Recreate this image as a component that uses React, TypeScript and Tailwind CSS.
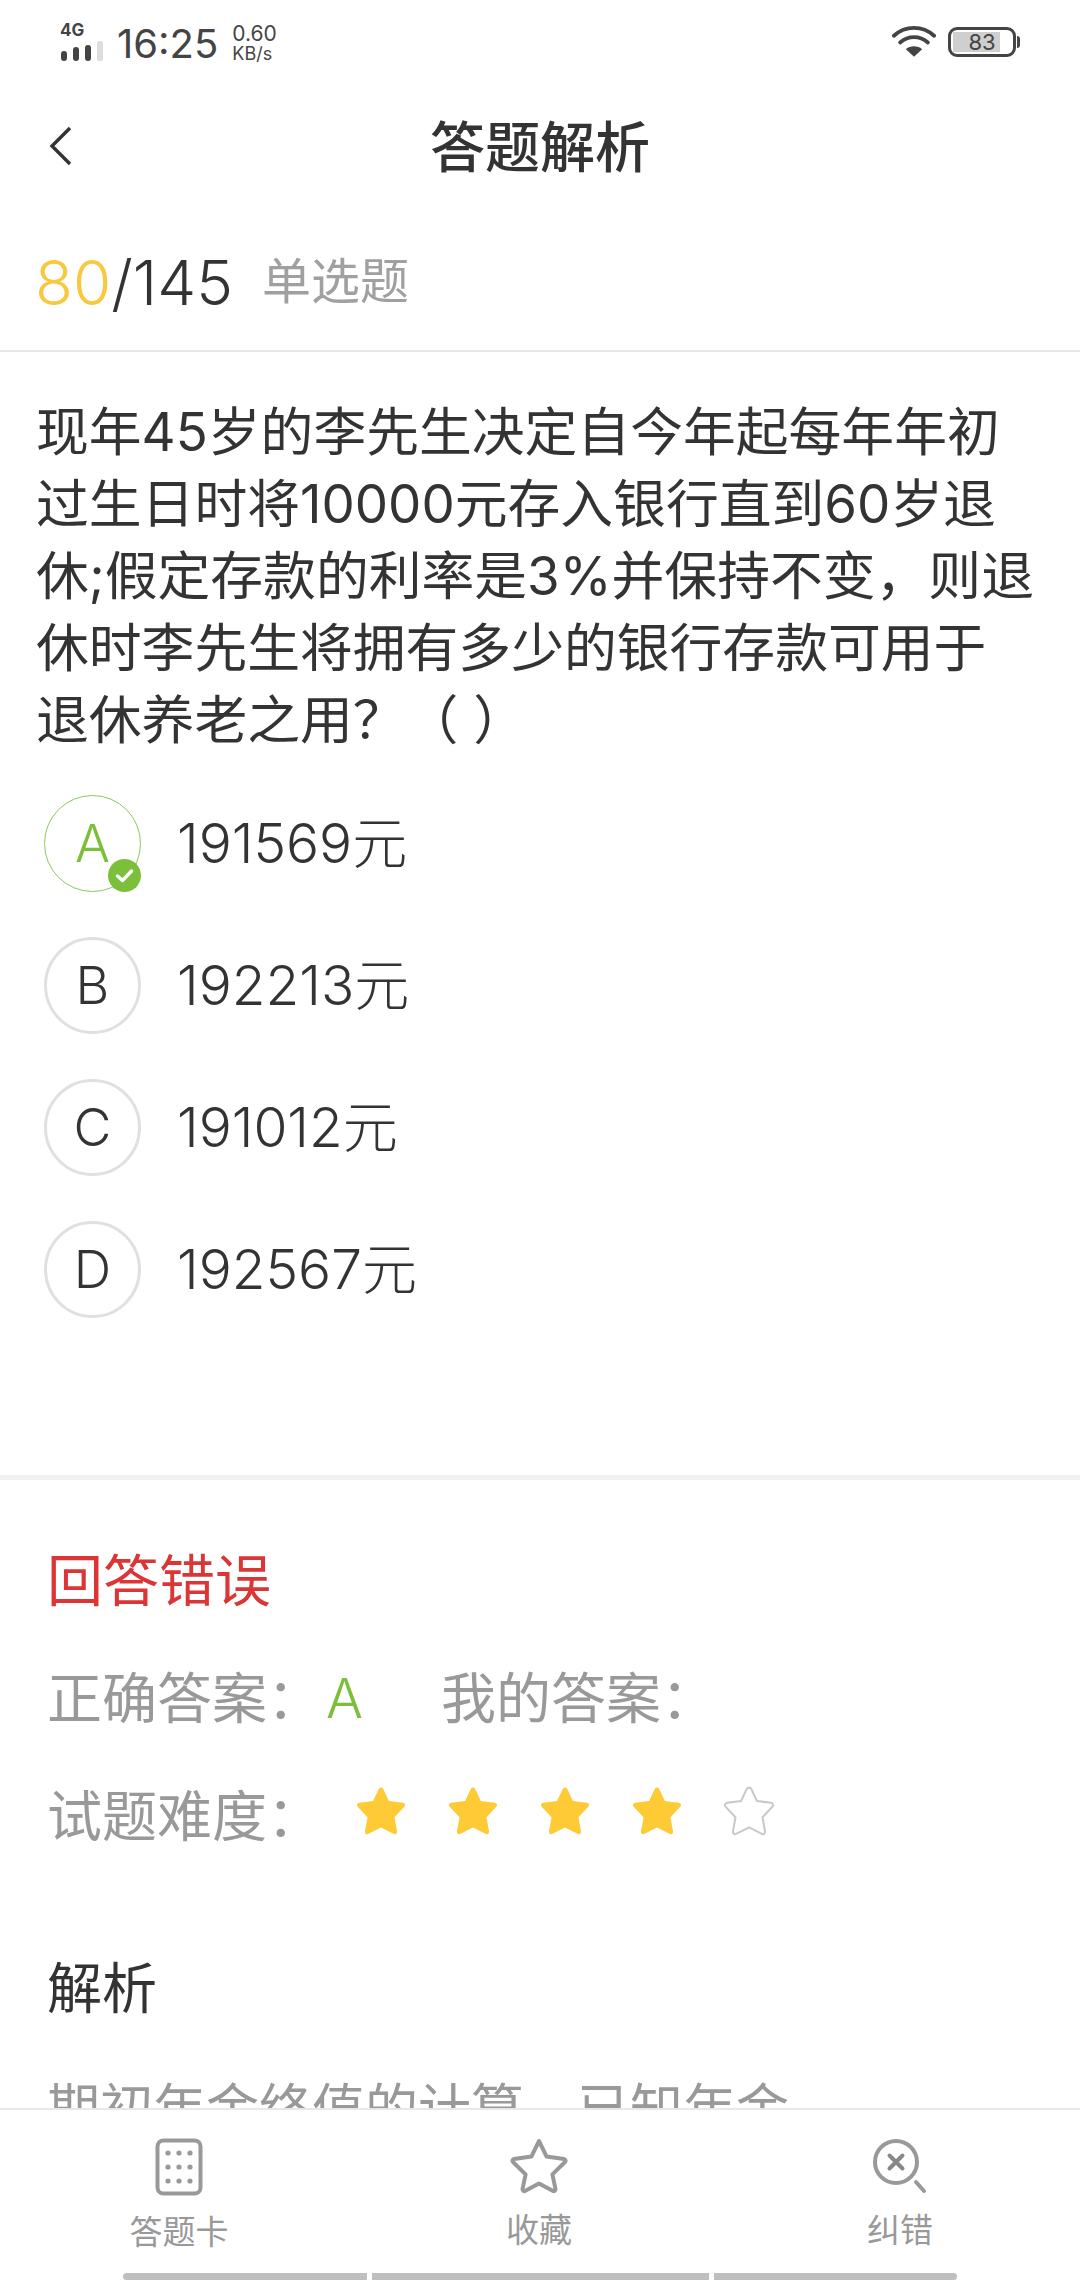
import React from "react";

const options = [
  { key: "A", text: "191569元", correct: true },
  { key: "B", text: "192213元" },
  { key: "C", text: "191012元" },
  { key: "D", text: "192567元" },
];

const StarIcon = ({ filled }: { filled: boolean }) => (
  <svg width="52" height="52" viewBox="0 0 50 50" className="block">
    <path
      d="M25 2.5 C26 2.5 26.8 3 27.3 4 L32.6 15.4 L45.9 17 C48 17.3 48.8 19.4 47.4 21 L38 31 L40.4 44.6 C40.8 46.5 39 47.8 37.4 47 L25 40.8 L12.6 47 C11 47.8 9.2 46.5 9.6 44.6 L12 31 L2.6 21 C1.2 19.4 2 17.3 4.1 17 L17.4 15.4 L22.7 4 C23.2 3 24 2.5 25 2.5 Z"
      fill={filled ? "#fecb37" : "#fff"}
      stroke={filled ? "#fecb37" : "#c9c9cc"}
      strokeWidth={filled ? 0 : 2}
    />
  </svg>
);

const CardIcon = () => (
  <svg width="48" height="58" viewBox="0 0 48 58" fill="none" className="block">
    <rect x="2.5" y="2.5" width="43" height="53" rx="6" stroke="#999" strokeWidth="4" />
    {[15, 29, 43].map((y) =>
      [13, 24, 35].map((x) => <circle key={`${x}-${y}`} cx={x} cy={y} r="2.6" fill="#999" />)
    )}
  </svg>
);

const TabStar = () => (
  <svg width="58" height="56" viewBox="0 0 58 56" fill="none" className="block">
    <path
      d="M29 3 L36.6 18.6 L54 21 C55.6 21.3 56 23 55 24 L42.4 36.4 L45.4 50.6 C45.7 52.6 44 53.6 42.6 52.8 L29 45.4 L15.4 52.8 C14 53.6 12.3 52.6 12.6 50.6 L15.6 36.4 L3 24 C2 23 2.4 21.3 4 21 L21.4 18.6 Z"
      stroke="#999"
      strokeWidth="4"
      strokeLinejoin="round"
    />
  </svg>
);

const SearchX = () => (
  <svg width="56" height="56" viewBox="0 0 56 56" fill="none" className="block">
    <circle cx="24" cy="24" r="21" stroke="#999" strokeWidth="4" />
    <path d="M17.5 17.5 L30.5 30.5 M30.5 17.5 L17.5 30.5" stroke="#888" strokeWidth="4" strokeLinecap="round" />
    <path d="M44 44 L52 53" stroke="#999" strokeWidth="4" strokeLinecap="round" />
  </svg>
);

const StatusBar = () => (
  <div className="h-[80px] shrink-0 flex items-start justify-between pl-[60px] pr-[64px] text-[#444]">
    <div className="flex items-start">
      <div className="w-[44px] pt-[22px]">
        <div className="text-[17px] leading-[16px] font-bold">4G</div>
        <div className="flex gap-[6px] mt-[3px] pl-[1px] items-end">
          <span className="w-[6px] h-[10px] rounded-[3px] bg-[#444]" />
          <span className="w-[6px] h-[14px] rounded-[3px] bg-[#444]" />
          <span className="w-[6px] h-[16px] rounded-[3px] bg-[#444]" />
          <span className="w-[6px] h-[20px] rounded-[2px] bg-[#ddd]" />
        </div>
      </div>
      <div className="ml-[13px] mt-[24px] text-[40px] leading-[40px]">16:25</div>
      <div className="ml-[14px] mt-[23px]">
        <div className="text-[21px] leading-[22px]">0.60</div>
        <div className="text-[18px] leading-[18px]">KB/s</div>
      </div>
    </div>
    <div className="flex items-start mt-[25px]">
      <svg width="44" height="33" viewBox="0 0 46 34" fill="none" className="block">
        <path d="M2 11 C14 0 32 0 44 11" stroke="#444" strokeWidth="4" strokeLinecap="round" />
        <path d="M8.5 18 C17 10.5 29 10.5 37.5 18" stroke="#444" strokeWidth="4" strokeLinecap="round" />
        <path d="M23 33 L14.5 25 C19 21 27 21 31.5 25 Z" fill="#444" />
      </svg>
      <div className="relative ml-[12px] mt-[2px] w-[68px] h-[30px] rounded-[9px] border-[3px] border-[#444] p-[2px]">
        <div className="h-full w-[47px] bg-[#cfcfcf]" />
        <span className="absolute inset-0 flex items-center justify-center text-[22px] leading-none">83</span>
        <span className="absolute -right-[7px] top-[6px] w-[3px] h-[12px] rounded-r-[3px] bg-[#444]" />
      </div>
    </div>
  </div>
);

export default function App() {
  return (
    <div className="w-[1080px] h-[2280px] bg-white flex flex-col overflow-hidden font-['Inter','Noto_Sans_CJK_SC',sans-serif] text-[#333]">
      <StatusBar />

      {/* Header */}
      <div className="h-[134px] shrink-0 relative flex items-center justify-center">
        <svg width="24" height="40" viewBox="0 0 24 40" fill="none" className="absolute left-[49px] top-[46px]">
          <path d="M21 2 L3 20 L21 38" stroke="#333" strokeWidth="3.4" />
        </svg>
        <span className="text-[55px] leading-[66px] font-medium">答题解析</span>
      </div>

      {/* Question no. */}
      <div className="h-[138px] shrink-0 flex items-center pl-[35px] border-b-2 border-[#e8e8e8]">
        <span className="text-[62px] font-light text-[#f8c93f]">80</span>
        <span className="text-[62px] font-light">/145</span>
        <span className="ml-[29px] text-[49px] text-[#a0a0a0]">单选题</span>
      </div>

      <div className="flex-1 overflow-hidden">
        <p className="pl-[36px] pr-[44px] pt-[44px] text-[52.8px] leading-[72px]">
          现年45岁的李先生决定自今年起每年年初过生日时将10000元存入银行直到60岁退休;假定存款的利率是3%并保持不变，则退休时李先生将拥有多少的银行存款可用于退休养老之用？（ ）
        </p>

        <div className="pl-[44px] pt-[39px] flex flex-col gap-[45px] pb-[157px] border-b-[5px] border-[#f0f0f0]">
          {options.map((o) => (
            <div key={o.key} className="flex items-center">
              <div
                className={`relative w-[97px] h-[97px] rounded-full flex items-center justify-center text-[52px] font-light ${
                  o.correct ? "border border-[#8ec860] text-[#7cbf3a]" : "border-[3px] border-[#e0e0e0]"
                }`}
              >
                {o.key}
                {o.correct && (
                  <span className="absolute right-[-1px] bottom-[-1px] w-[33px] h-[33px] rounded-full bg-[#7cbf3a] flex items-center justify-center">
                    <svg width="19" height="15" viewBox="0 0 19 15" fill="none">
                      <path d="M2.5 8 L7.5 12.5 L16.5 3" stroke="#fff" strokeWidth="3.4" strokeLinecap="round" strokeLinejoin="round" />
                    </svg>
                  </span>
                )}
              </div>
              <span className="ml-[36px] text-[55px] font-light">{o.text}</span>
            </div>
          ))}
        </div>

        <div className="pl-[47px] pt-[66px]">
          <div className="text-[56px] leading-[70px] text-[#dc3535]">回答错误</div>
          <div className="mt-[47px] flex items-center text-[55px] leading-[70px] text-[#999]">
            <span>正确答案：</span>
            <span className="ml-[4px] font-light text-[#7cbf3a]">A</span>
            <span className="ml-[78px]">我的答案：</span>
          </div>
          <div className="mt-[48px] flex items-center text-[55px] leading-[70px] text-[#999]">
            <span>试题难度：</span>
            <div className="ml-[33px] -mt-[10px] flex gap-[40px]">
              {[true, true, true, true, false].map((f, i) => (
                <StarIcon key={i} filled={f} />
              ))}
            </div>
          </div>
          <div className="mt-[102px] text-[55px] leading-[70px]">解析</div>
          <div className="mt-[50px] text-[53px] leading-[72px] text-[#999] whitespace-nowrap">期初年金终值的计算，已知年金</div>
        </div>
      </div>

      {/* Tab bar */}
      <div className="h-[172px] shrink-0 bg-white border-t-2 border-[#e8e8e8] flex flex-col">
        <div className="flex-1 grid grid-cols-[358px_362px_360px] pt-[28px]">
          <div className="flex flex-col items-center">
            <CardIcon />
            <span className="mt-[14px] text-[33px] leading-[44px] text-[#999]">答题卡</span>
          </div>
          <div className="flex flex-col items-center">
            <TabStar />
            <span className="mt-[14px] text-[33px] leading-[44px] text-[#999]">收藏</span>
          </div>
          <div className="flex flex-col items-center">
            <SearchX />
            <span className="mt-[14px] text-[33px] leading-[44px] text-[#999]">纠错</span>
          </div>
        </div>
        <div className="h-[7px] flex justify-center gap-[5px]">
          <span className="w-[244px] rounded-l-[4px] bg-[#bfbfbf]" />
          <span className="w-[337px] bg-[#bfbfbf]" />
          <span className="w-[243px] rounded-r-[4px] bg-[#bfbfbf]" />
        </div>
      </div>
    </div>
  );
}
